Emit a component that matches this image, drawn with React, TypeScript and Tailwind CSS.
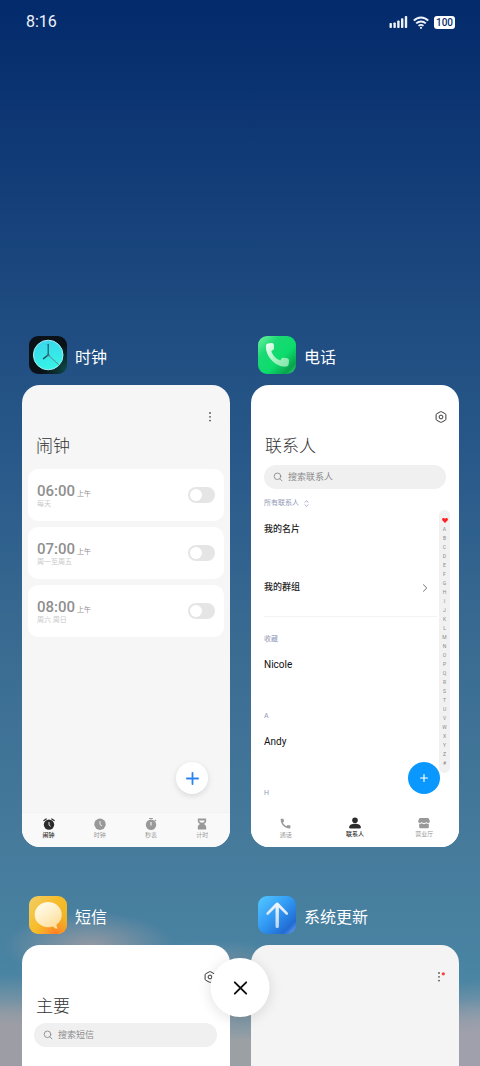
import type { ReactNode } from "react";
import { MdCall } from "react-icons/md";

const INDEX_LETTERS = "ABCDEFGHIJKLMNOPQRSTUVWXYZ#".split("");

const ALARMS = [
  { time: "06:00", period: "上午", repeat: "每天" },
  { time: "07:00", period: "上午", repeat: "周一至周五" },
  { time: "08:00", period: "上午", repeat: "周六 周日" },
];

function StatusBar() {
  return (
    <header className="flex h-11 shrink-0 items-center justify-between pr-[25px] pl-[26px] text-[#eef3fb]">
      <time className="text-base leading-5">8:16</time>
      <div className="flex items-center gap-[5px]">
        <svg className="h-3 w-[19px]" viewBox="0 0 19 12" fill="currentColor" aria-label="信号">
          <rect x="0.5" y="7" width="2.4" height="5" rx="0.8" />
          <rect x="4.4" y="6.4" width="2.4" height="5.6" rx="0.8" />
          <rect x="8.2" y="4.4" width="2.4" height="7.6" rx="0.8" />
          <rect x="12" y="2.2" width="2.4" height="9.8" rx="0.8" />
          <rect x="15.8" y="0" width="2.4" height="12" rx="0.8" />
        </svg>
        <svg className="h-[13px] w-4" viewBox="0 0 16 13" fill="none" stroke="currentColor" strokeWidth="2" aria-label="无线网络">
          <path d="M.8 4.6C4.800.3 11.200.3 15.200 4.600" />
          <path d="M3.200 7.400C5.900 4.700 10.100 4.700 12.800 7.400" />
          <path d="M5.500 9.900C7 8.600 9 8.600 10.500 9.900" strokeWidth="1.700" />
          <circle cx="8" cy="11.800" r="1.100" fill="currentColor" stroke="none" />
        </svg>
        <span className="flex h-[13px] w-[21px] items-center justify-center rounded-[3px] bg-white text-[10px] leading-[13px] font-medium text-[#062d6e]">
          100
        </span>
      </div>
    </header>
  );
}

function ClockIcon() {
  return (
    <svg className="size-[38px]" viewBox="0 0 38 38" aria-hidden="true">
      <defs>
        <radialGradient id="clock-bg" cx="0.95" cy="0.85" r="0.6">
          <stop offset="0" stopColor="#0d4644" />
          <stop offset="1" stopColor="#0a1218" />
        </radialGradient>
        <linearGradient id="clock-face" x1="0" y1="0" x2="0.3" y2="1">
          <stop offset="0" stopColor="#3bd3ee" />
          <stop offset="1" stopColor="#35f3e6" />
        </linearGradient>
      </defs>
      <rect width="38" height="38" rx="9" fill="url(#clock-bg)" />
      <circle cx="19.200" cy="19" r="14.800" fill="url(#clock-face)" stroke="#a5eef3" strokeWidth="1" />
      <g fill="none" strokeLinecap="round">
        <path d="M19.200 19 29.500 28.500" stroke="#59797c" strokeWidth="0.900" />
        <path d="M19.200 19V8.300" stroke="#1b5560" strokeWidth="1.200" />
        <path d="M19.200 19 14.500 22.600" stroke="#1b5560" strokeWidth="1.500" />
      </g>
      <circle cx="19.200" cy="19" r="1.300" fill="#456c72" />
    </svg>
  );
}

function PhoneIcon() {
  return (
    <svg className="size-[38px]" viewBox="0 0 38 38" aria-hidden="true">
      <defs>
        <linearGradient id="phone-bg" x1="0" y1="0" x2="1" y2="1">
          <stop offset="0" stopColor="#72f5a3" />
          <stop offset="0.300" stopColor="#19d973" />
          <stop offset="0.600" stopColor="#0cdc6c" />
          <stop offset="0.850" stopColor="#08a34d" />
          <stop offset="1" stopColor="#37db7d" />
        </linearGradient>
        <linearGradient id="phone-handset" x1="0" y1="0" x2="1" y2="1">
          <stop offset="0" stopColor="#f4fff8" />
          <stop offset="0.550" stopColor="#a5f2c1" />
          <stop offset="1" stopColor="#80e4a8" />
        </linearGradient>
      </defs>
      <rect width="38" height="38" rx="9" fill="url(#phone-bg)" />
      <path
        d="M9.800 7.400 14.200 7.100Q15.800 7.100 15.900 8.800L16 12.300Q16 13.700 14.700 14.300L13.300 15C14.500 19.300 18 22.900 22.400 24.400L23.300 22.800Q24 21.500 25.400 21.700L29.300 22.300Q31 22.600 31 24.200L30.700 28.300Q30.500 30.100 28.500 30.600C17.800 31.800 6.900 19.800 8 9.500Q8.200 7.600 9.800 7.400Z"
        fill="url(#phone-handset)"
      />
    </svg>
  );
}

function MessageIcon() {
  return (
    <svg className="size-[38px]" viewBox="0 0 38 38" aria-hidden="true">
      <defs>
        <linearGradient id="message-bg" x1="0" y1="0" x2="1" y2="0.800">
          <stop offset="0" stopColor="#f1ce69" />
          <stop offset="0.500" stopColor="#f7bd2b" />
          <stop offset="1" stopColor="#ebb224" />
        </linearGradient>
        <radialGradient id="message-glow" cx="0.700" cy="1" r="0.550">
          <stop offset="0" stopColor="#ff7c25" />
          <stop offset="1" stopColor="#ff9c25" stopOpacity="0" />
        </radialGradient>
        <linearGradient id="message-bubble" x1="0" y1="0" x2="0.700" y2="1">
          <stop offset="0" stopColor="#fffdf0" />
          <stop offset="0.500" stopColor="#fff1cd" />
          <stop offset="1" stopColor="#ffdf9c" />
        </linearGradient>
      </defs>
      <rect width="38" height="38" rx="9" fill="url(#message-bg)" />
      <rect width="38" height="38" rx="9" fill="url(#message-glow)" />
      <path d="M22 28.500 27.500 26.500Q27 30 28.700 32.800Q25.500 32.800 23.800 30.300Z" fill="#ffdf9c" />
      <ellipse cx="19.200" cy="18.700" rx="13.500" ry="12.600" fill="url(#message-bubble)" />
    </svg>
  );
}

function UpdateIcon() {
  return (
    <svg className="size-[38px]" viewBox="0 0 38 38" aria-hidden="true">
      <defs>
        <linearGradient id="update-bg" x1="0" y1="0" x2="1" y2="1">
          <stop offset="0" stopColor="#55c8ff" />
          <stop offset="0.450" stopColor="#329cf5" />
          <stop offset="0.820" stopColor="#216bd3" />
          <stop offset="1" stopColor="#7eaaf6" />
        </linearGradient>
        <linearGradient id="update-arrow" x1="0" y1="0" x2="0" y2="1">
          <stop offset="0" stopColor="#f3f8fd" />
          <stop offset="1" stopColor="#b9d5f1" />
        </linearGradient>
      </defs>
      <rect width="38" height="38" rx="9" fill="url(#update-bg)" />
      <path
        d="M17.500 11.500 10.500 18.500Q9.300 19.300 8.600 18.500Q7.900 17.500 8.800 16.500L17.500 7.500Q19.200 5.500 20.900 7.500L29.600 16.500Q30.500 17.500 29.800 18.500Q29 19.300 27.900 18.500L20.900 11.500V30.700Q20.900 32 19.200 32Q17.500 32 17.500 30.700Z"
        fill="url(#update-arrow)"
      />
    </svg>
  );
}

function SettingsIcon() {
  return (
    <svg className="size-3" viewBox="0 0 12 12" fill="none" stroke="#3a3a3a" strokeWidth="1" strokeLinejoin="round" aria-hidden="true">
      <path d="M5.300.800Q6 .400 6.700.800L10.300 2.800Q10.900 3.100 10.900 3.800V8.200Q10.900 8.900 10.300 9.200L6.700 11.200Q6 11.600 5.300 11.200L1.700 9.200Q1.100 8.900 1.100 8.200V3.800Q1.100 3.100 1.700 2.800Z" />
      <circle cx="6" cy="6" r="1.900" />
    </svg>
  );
}

function MoreIcon({ badge = false }: { badge?: boolean }) {
  return (
    <svg className="size-3" viewBox="0 0 12 12" fill="#555" aria-hidden="true">
      <circle cx="6" cy="2" r="0.900" />
      <circle cx="6" cy="5.800" r="0.900" />
      <circle cx="6" cy="9.600" r="0.900" />
      {badge && <circle cx="10.300" cy="2.800" r="1.600" fill="#ff3b3b" />}
    </svg>
  );
}

function AlarmTabIcon() {
  return (
    <svg className="size-3" viewBox="0 0 12 12" fill="currentColor" aria-hidden="true">
      <circle cx="6" cy="6.600" r="5.200" />
      <path d="M.900 2.600 3.200.900M11.100 2.600 8.800.900" stroke="currentColor" strokeWidth="1.200" strokeLinecap="round" />
      <path d="M6 4V6.900L7.600 8.400" fill="none" stroke="#fafafa" strokeWidth="0.900" />
    </svg>
  );
}

function ClockTabIcon() {
  return (
    <svg className="size-3" viewBox="0 0 12 12" fill="currentColor" aria-hidden="true">
      <circle cx="6" cy="6.200" r="5.700" />
      <path d="M6 3.200V6.500L8 8" fill="none" stroke="#fafafa" strokeWidth="0.900" />
    </svg>
  );
}

function StopwatchTabIcon() {
  return (
    <svg className="size-3" viewBox="0 0 12 12" fill="currentColor" aria-hidden="true">
      <circle cx="6" cy="6.700" r="5.200" />
      <rect x="4" y="0" width="4" height="1.100" rx="0.500" />
      <path d="m9.800 1.900 1.200 1.200" stroke="currentColor" strokeWidth="1.200" />
      <path d="M6 4V7.400" stroke="#fafafa" strokeWidth="1.100" />
    </svg>
  );
}

function TimerTabIcon() {
  return (
    <svg className="size-3" viewBox="0 0 12 12" fill="currentColor" aria-hidden="true">
      <path
        fillRule="evenodd"
        d="M2.300.500H9.700Q10.200.500 10.200 1V2.700C10.200 4.700 9 5.500 7.900 6C9 6.500 10.200 7.400 10.200 9.400V11Q10.200 11.500 9.700 11.500H2.300Q1.800 11.500 1.800 11V9.400C1.800 7.400 3 6.500 4.100 6C3 5.500 1.800 4.700 1.800 2.700V1Q1.800.500 2.300.500ZM3.200 2.600C3.200 3.700 4.400 4.700 6 4.700C7.600 4.700 8.800 3.700 8.800 2.600Z"
      />
    </svg>
  );
}

function PersonTabIcon() {
  return (
    <svg className="size-3" viewBox="0 0 12 12" fill="currentColor" aria-hidden="true">
      <circle cx="6" cy="3.200" r="2.800" />
      <path d="M6 6.800C9 6.800 11.800 7.900 11.800 10.200Q11.800 11.500 10.700 11.500H1.300Q.200 11.500.200 10.200C.200 7.900 3 6.800 6 6.800Z" />
    </svg>
  );
}

function StoreTabIcon() {
  return (
    <svg className="size-3" viewBox="0 0 12 12" fill="currentColor" aria-hidden="true">
      <path d="M2 .900H10Q10.600.900 10.800 1.500L11.800 4C12 5.300 11.200 6 10.200 6Q9 6 8.500 5.100Q7.500 6.100 6 6.100Q4.500 6.100 3.500 5.100Q3 6 1.800 6C.800 6 0 5.300.200 4L1.200 1.500Q1.400.900 2 .900Z" />
      <path d="M1.200 6.800Q2.500 7 3.500 6.200Q4.700 7 6 7Q7.300 7 8.500 6.200Q9.500 7 10.800 6.800V10.200Q10.800 11.200 9.800 11.200H2.200Q1.200 11.200 1.200 10.200Z" />
    </svg>
  );
}

function SearchBox({ id, label }: { id: string; label: string }) {
  return (
    <label htmlFor={id} className="flex h-6 items-center gap-[5px] rounded-full bg-[#f0f0f0] px-[9px]">
      <svg className="size-[10px] shrink-0" viewBox="0 0 10 10" fill="none" stroke="#8c8c8c" strokeWidth="0.900" strokeLinecap="round" aria-hidden="true">
        <circle cx="4.500" cy="4.300" r="3.300" />
        <path d="m7 6.900 2 2" />
      </svg>
      <input
        id={id}
        type="search"
        aria-label={label}
        placeholder={label}
        className="w-full min-w-0 bg-transparent text-[9px] leading-3 outline-none placeholder:text-[#8c8c8c]"
      />
    </label>
  );
}

function ScreenHeader({ title, action, actionLabel, inset = "pr-[14px]" }: { title?: string; action: ReactNode; actionLabel: string; inset?: string }) {
  return (
    <div className={`flex flex-col gap-[11px] pt-[26px] pl-[14px] ${inset}`}>
      <button type="button" aria-label={actionLabel} className="self-end">
        {action}
      </button>
      {title && <h3 className="text-[17px] leading-6 font-light text-[#333]">{title}</h3>}
    </div>
  );
}

function TabBar({ tabs, className }: { tabs: { label: string; icon: ReactNode; active?: boolean }[]; className: string }) {
  return (
    <nav className={`mt-auto flex h-[35px] pt-[5px] ${className}`}>
      {tabs.map((tab) => (
        <button
          key={tab.label}
          type="button"
          className={`flex flex-1 flex-col items-center text-[6px] leading-[9px] ${tab.active ? "font-medium text-[#2b2b2b]" : "text-[#999]"}`}
        >
          {tab.icon}
          {tab.label}
        </button>
      ))}
    </nav>
  );
}

function AppCard({ name, icon, surface, children }: { name: string; icon: ReactNode; surface: string; children: ReactNode }) {
  return (
    <section className="flex flex-col gap-[11px]">
      <div className="flex items-center gap-2 pl-[7px]">
        {icon}
        <h2 className="pt-[6px] text-base leading-6 text-white">{name}</h2>
      </div>
      <article className={`relative flex h-[462px] flex-col overflow-hidden rounded-[18px] ${surface}`}>{children}</article>
    </section>
  );
}

function AlarmScreen() {
  return (
    <>
      <ScreenHeader title="闹钟" action={<MoreIcon />} actionLabel="更多" />
      <ul className="mt-[11px] flex flex-col gap-[6px] px-[6px]">
        {ALARMS.map((alarm) => (
          <li key={alarm.time}>
            <label className="flex h-[52px] items-center justify-between rounded-[10px] bg-white px-[9px]">
              <span className="flex flex-col">
                <span className="flex items-baseline gap-[2px] text-[#8f8f8f]">
                  <span className="text-[15px] leading-[18px] font-medium">{alarm.time}</span>
                  <span className="text-[7px] leading-[9px]">{alarm.period}</span>
                </span>
                <span className="text-[7px] leading-[9px] text-[#c9c9c9]">{alarm.repeat}</span>
              </span>
              <input
                type="checkbox"
                role="switch"
                className="flex h-4 w-[27px] appearance-none items-center rounded-full bg-[#e5e5e5] px-[2px] before:size-3 before:rounded-full before:bg-white checked:justify-end checked:bg-[#0d84ff]"
              />
            </label>
          </li>
        ))}
      </ul>
      <button
        type="button"
        aria-label="添加闹钟"
        className="absolute right-[22px] bottom-[53px] flex size-8 items-center justify-center rounded-full bg-white shadow-[0_2px_6px_rgba(0,0,0,0.12)]"
      >
        <svg className="size-[13px]" viewBox="0 0 13 13" stroke="#2b83f0" strokeWidth="1.800" strokeLinecap="round" aria-hidden="true">
          <path d="M6.500.900V12.100M.900 6.500H12.100" />
        </svg>
      </button>
      <TabBar
        className="border-t border-[#f2f2f2] bg-[#f9f9f9] pr-[2px] pl-[1px]"
        tabs={[
          { label: "闹钟", icon: <AlarmTabIcon />, active: true },
          { label: "时钟", icon: <ClockTabIcon /> },
          { label: "秒表", icon: <StopwatchTabIcon /> },
          { label: "计时", icon: <TimerTabIcon /> },
        ]}
      />
    </>
  );
}

function SectionLabel({ children }: { children: ReactNode }) {
  return <h4 className="mb-[2px] pt-[1px] text-[7px] leading-[10px] text-[#8f98b8]">{children}</h4>;
}

function ContactRow({ name }: { name: string }) {
  return <p className="mb-7 flex h-9 items-center text-[10px] text-[#111]">{name}</p>;
}

function ContactsScreen() {
  return (
    <>
      <ScreenHeader title="联系人" action={<SettingsIcon />} actionLabel="设置" inset="pr-3" />
      <div className="mt-[7px] px-[13px]">
        <SearchBox id="contact-search" label="搜索联系人" />
        <button type="button" className="mt-[9px] mb-[2px] flex items-center gap-[5px] text-[7px] leading-[10px] text-[#8f98b8]">
          所有联系人
          <svg className="h-[7px] w-[5px]" viewBox="0 0 5 7" fill="none" stroke="currentColor" strokeWidth="0.800" aria-hidden="true">
            <path d="M.700 2.500 2.500.700 4.300 2.500M.700 4.500 2.500 6.300 4.300 4.500" />
          </svg>
        </button>
      </div>
      <div className="flex gap-[2px] pr-[9px] pl-[13px]">
        <div className="flex min-w-0 flex-1 flex-col">
          <p className="flex h-9 items-center pt-[3px] text-[9px] font-medium text-[#222]">我的名片</p>
          <a href="#groups" className="mt-[23px] flex h-9 items-center justify-between pt-[2px] pr-[9px] text-[9px] font-medium text-[#222]">
            我的群组
            <svg className="h-2 w-[6px]" viewBox="0 0 6 8" fill="none" stroke="#707070" strokeWidth="1" aria-hidden="true">
              <path d="M1.200.500 4.800 4 1.200 7.500" />
            </svg>
          </a>
          <hr className="mt-[11px] mb-4 border-[#f3f3f3]" />
          <SectionLabel>收藏</SectionLabel>
          <ContactRow name="Nicole" />
          <SectionLabel>A</SectionLabel>
          <ContactRow name="Andy" />
          <SectionLabel>H</SectionLabel>
        </div>
        <nav aria-label="字母索引" className="flex w-[11px] flex-col self-start rounded-full bg-[#f1f1f1] pt-[6px] pb-[5px]">
          <a href="#favorites" aria-label="收藏" className="flex h-[9px] items-center justify-center">
            <svg className="h-[5px] w-[6px]" viewBox="0 0 12 10" fill="#ff2121" aria-hidden="true">
              <path d="M6 10 1 5.200C-.500 3.500 0 0 3 0Q5 0 6 1.700Q7 0 9 0C12 0 12.500 3.500 11 5.200Z" />
            </svg>
          </a>
          {INDEX_LETTERS.map((letter) => (
            <a key={letter} href={`#${letter}`} className="h-[9px] text-center text-[5px] leading-[9px] text-[#8a8a8a]">
              {letter}
            </a>
          ))}
        </nav>
      </div>
      <button
        type="button"
        aria-label="新建联系人"
        className="absolute right-[19px] bottom-[53px] flex size-8 items-center justify-center rounded-full bg-[#0a98fe]"
      >
        <svg className="size-2" viewBox="0 0 8 8" stroke="white" strokeWidth="1.200" strokeLinecap="round" aria-hidden="true">
          <path d="M4 .600V7.400M.600 4H7.400" />
        </svg>
      </button>
      <TabBar
        className="bg-white"
        tabs={[
          { label: "通话", icon: <MdCall className="size-[13px]" /> },
          { label: "联系人", icon: <PersonTabIcon />, active: true },
          { label: "营业厅", icon: <StoreTabIcon /> },
        ]}
      />
    </>
  );
}

function MessagesScreen() {
  return (
    <>
      <ScreenHeader title="主要" action={<SettingsIcon />} actionLabel="设置" />
      <div className="mt-[5px] pr-[13px] pl-3">
        <SearchBox id="message-search" label="搜索短信" />
      </div>
    </>
  );
}

export default function App() {
  return (
    <div
      lang="zh-CN"
      className="relative flex h-screen flex-col overflow-hidden bg-[radial-gradient(ellipse_85px_34px_at_90px_946px,#9499a3_0%,#9499a300_100%),radial-gradient(ellipse_110px_50px_at_215px_990px,#a0a2a8_0%,#a0a2a800_100%),radial-gradient(ellipse_150px_110px_at_10px_1085px,#9c9da5_55%,#9c9da500_100%),radial-gradient(ellipse_110px_105px_at_480px_1085px,#9fa0ac_50%,#9fa0ac00_100%),linear-gradient(to_bottom,#032a6b_0px,#08306f_60px,#1f4c81_325px,#2a5b8b_480px,#3a6c92_650px,#467b9c_850px,#4983a2_960px,#4b87a4_1000px,#9ba0a5_1040px)] font-[Roboto,'Noto_Sans_CJK_SC',sans-serif]"
    >
      <StatusBar />
      <main className="grid shrink-0 grid-cols-2 gap-x-[21px] gap-y-[49px] pt-[292px] pr-[21px] pl-[22px]">
        <AppCard name="时钟" icon={<ClockIcon />} surface="bg-[#f6f6f6]">
          <AlarmScreen />
        </AppCard>
        <AppCard name="电话" icon={<PhoneIcon />} surface="bg-white">
          <ContactsScreen />
        </AppCard>
        <AppCard name="短信" icon={<MessageIcon />} surface="bg-white">
          <MessagesScreen />
        </AppCard>
        <AppCard name="系统更新" icon={<UpdateIcon />} surface="bg-[#f4f4f4]">
          <ScreenHeader action={<MoreIcon badge />} actionLabel="更多" />
        </AppCard>
      </main>
      <button
        type="button"
        aria-label="全部关闭"
        className="absolute bottom-[49px] left-1/2 flex size-[59px] -translate-x-1/2 items-center justify-center rounded-full bg-white shadow-[0_2px_14px_rgba(0,0,0,0.12)]"
      >
        <svg className="size-[14px]" viewBox="0 0 14 14" stroke="#111" strokeWidth="1.900" strokeLinecap="round" aria-hidden="true">
          <path d="M1.300 1.300 12.700 12.700M12.700 1.300 1.300 12.700" />
        </svg>
      </button>
    </div>
  );
}
